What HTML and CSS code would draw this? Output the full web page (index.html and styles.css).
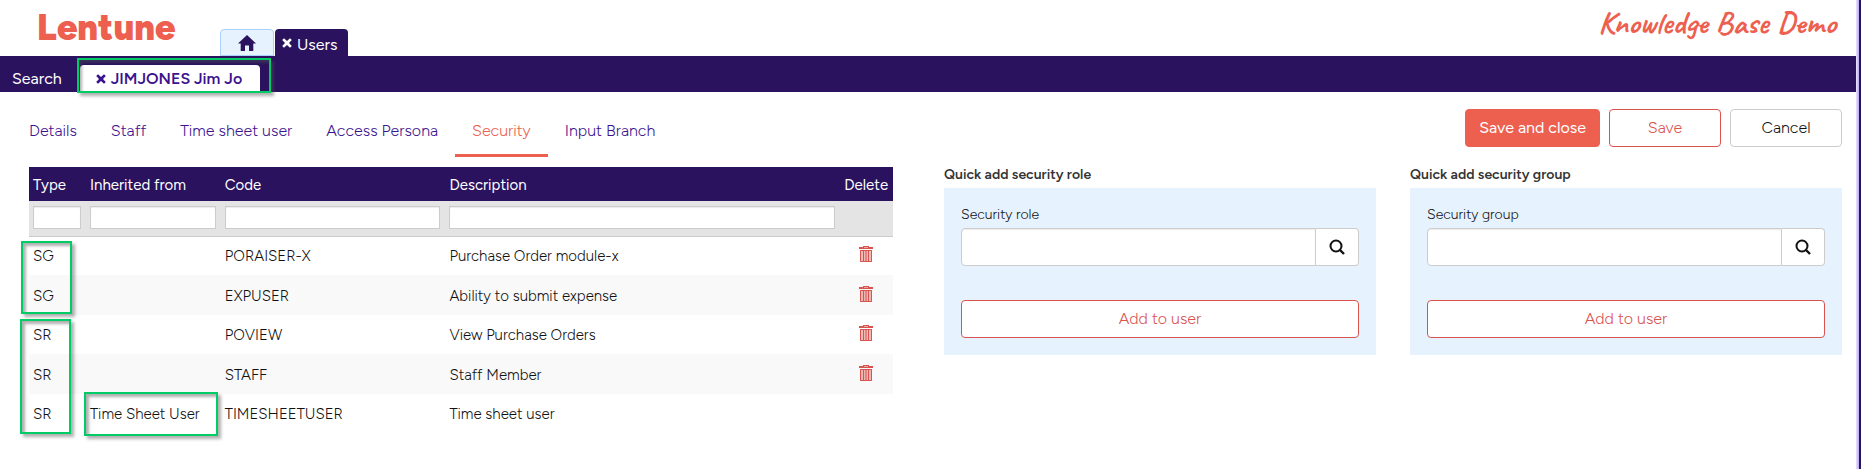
FILE: index.html
```html
<!DOCTYPE html>
<html lang="en">
<head>
<meta charset="utf-8">
<title>Lentune - Users</title>
<link rel="stylesheet" href="styles.css">
</head>
<body>
<svg width="0" height="0" class="defs" aria-hidden="true">
  <symbol id="cross" viewBox="0 0 10 10"><path d="M2 0.3 L5 3 L8 0.3 L9.8 2.1 L7 5 L9.8 7.9 L8 9.7 L5 7 L2 9.7 L0.2 7.9 L3 5 L0.2 2.1Z"/></symbol>
  <symbol id="trash" viewBox="0 0 14 16"><path d="M4 0h6v1H14v2H0V1h4zM5 1h4v.6h-4z" fill-rule="evenodd"/><path d="M1 4h12v12H1z" opacity=".4"/><path d="M1.500 4.500h11v11h-11zM4.500 5v10M7 5v10M9.500 5v10" fill="none" stroke="currentColor"/></symbol>
  <symbol id="search" viewBox="0 0 16 16"><circle cx="7" cy="7" r="5.500" fill="none" stroke="currentColor" stroke-width="2"/><path d="M10.500 10.500L15 15" stroke="currentColor" stroke-width="2.400"/></symbol>
</svg>
<div class="app">
  <header class="header">
    <a class="logo" href="#">Lentune</a>
    <nav class="main-tabs" aria-label="Modules">
      <a class="home-tab" href="#" aria-label="Home"><svg width="18" height="16" viewBox="0 0 18 16"><path d="M9 0L18 8.500H15.300V16H11V10.500H7V16H2.700V8.500H0Z"/></svg></a>
      <a class="users-tab" href="#"><svg class="cross" width="10" height="10"><use href="#cross"/></svg>Users</a>
    </nav>
    <div class="env-name">Knowledge Base Demo</div>
  </header>
  <nav class="subbar" aria-label="Open records">
    <a class="search-link" href="#">Search</a>
    <div class="record-wrap">
      <a class="record-tab" href="#"><svg class="cross" width="10" height="10"><use href="#cross"/></svg>JIMJONES Jim Jo</a>
      <span class="mark mark-record"></span>
    </div>
  </nav>
  <main class="content">
    <div class="toolbar">
      <nav class="tabs" aria-label="User sections">
        <a href="#">Details</a>
        <a href="#">Staff</a>
        <a href="#">Time sheet user</a>
        <a href="#">Access Persona</a>
        <a href="#" class="current">Security</a>
        <a href="#">Input Branch</a>
      </nav>
      <div class="actions">
        <button class="btn btn-primary" type="button">Save and close</button>
        <button class="btn btn-outline" type="button">Save</button>
        <button class="btn" type="button">Cancel</button>
      </div>
    </div>
    <div class="panels">
      <div class="table-wrap">
        <table class="roles">
          <colgroup><col class="c-type"><col class="c-from"><col class="c-code"><col class="c-desc"><col class="c-del"></colgroup>
          <thead>
            <tr><th>Type</th><th>Inherited from</th><th>Code</th><th>Description</th><th>Delete</th></tr>
            <tr class="filters">
              <td><input type="text" aria-label="Filter type"></td>
              <td><input type="text" aria-label="Filter inherited from"></td>
              <td><input type="text" aria-label="Filter code"></td>
              <td><input type="text" aria-label="Filter description"></td>
              <td></td>
            </tr>
          </thead>
          <tbody>
            <tr><td>SG</td><td></td><td>PORAISER-X</td><td>Purchase Order module-x</td><td class="del"><button type="button" aria-label="Delete"><svg width="14" height="16"><use href="#trash"/></svg></button></td></tr>
            <tr><td>SG</td><td></td><td>EXPUSER</td><td>Ability to submit expense</td><td class="del"><button type="button" aria-label="Delete"><svg width="14" height="16"><use href="#trash"/></svg></button></td></tr>
            <tr><td>SR</td><td></td><td>POVIEW</td><td>View Purchase Orders</td><td class="del"><button type="button" aria-label="Delete"><svg width="14" height="16"><use href="#trash"/></svg></button></td></tr>
            <tr><td>SR</td><td></td><td>STAFF</td><td>Staff Member</td><td class="del"><button type="button" aria-label="Delete"><svg width="14" height="16"><use href="#trash"/></svg></button></td></tr>
            <tr><td>SR</td><td>Time Sheet User</td><td>TIMESHEETUSER</td><td>Time sheet user</td><td></td></tr>
          </tbody>
        </table>
        <span class="mark mark-groups"></span>
        <span class="mark mark-roles"></span>
        <span class="mark mark-from"></span>
      </div>
      <div class="quick">
        <section>
          <h2>Quick add security role</h2>
          <div class="card">
            <label for="role">Security role</label>
            <div class="lookup"><input id="role" type="text"><button type="button" aria-label="Find role"><svg width="16" height="16"><use href="#search"/></svg></button></div>
            <button class="btn btn-outline" type="button">Add to user</button>
          </div>
        </section>
        <section>
          <h2>Quick add security group</h2>
          <div class="card">
            <label for="group">Security group</label>
            <div class="lookup"><input id="group" type="text"><button type="button" aria-label="Find group"><svg width="16" height="16"><use href="#search"/></svg></button></div>
            <button class="btn btn-outline" type="button">Add to user</button>
          </div>
        </section>
      </div>
    </div>
  </main>
</div>
<div class="edge"></div>
</body>
</html>
```

FILE: styles.css
```css
* { box-sizing: border-box; }
body {
  margin: 0;
  min-height: 100vh;
  display: flex;
  background: #fff;
  color: #111;
  font: 300 15px/20px Figtree, Lato, sans-serif;
}
a { text-decoration: none; color: inherit; }
button, input { font: inherit; color: inherit; }
svg { display: block; fill: currentColor; }
.defs { position: absolute; }
.app { flex: 1; min-width: 0; }
.edge {
  width: 5px;
  background: linear-gradient(to right, #e9e4ff, #b9aaf5 3px, #2a125f 3px);
}

.header { display: flex; height: 56px; padding: 0 20px 0 37px; }
.logo {
  width: 183px;
  color: #ed604f;
  font-size: 36px;
  font-weight: 900;
  line-height: 56px;
}
.main-tabs { display: flex; align-items: flex-end; gap: 1px; font-size: 16px; font-weight: 400; }
.home-tab, .users-tab {
  display: flex;
  align-items: center;
  height: 27px;
  border-radius: 4px 4px 0 0;
}
.home-tab {
  width: 54px;
  justify-content: center;
  background: #e7f2ff;
  border: 1px solid #a9d1fb;
  color: #2a125f;
}
.users-tab {
  gap: 5px;
  padding: 4px 11px 0 7px;
  background: #2a125f;
  color: #fff;
}
.users-tab .cross { margin-bottom: 3px; }
.env-name {
  margin-left: auto;
  color: #ed604f;
  font: bold 32px/46px Caveat, Lato, cursive;
}

.subbar {
  display: flex;
  align-items: flex-end;
  gap: 18px;
  height: 36px;
  padding-left: 12px;
  background: #2a125f;
  color: #fff;
  font-size: 16px;
  font-weight: 400;
}
.search-link { line-height: 27px; }
.record-wrap { position: relative; }
.record-tab {
  display: flex;
  align-items: center;
  gap: 5px;
  height: 27px;
  padding: 0 18px 0 16px;
  border-radius: 4px 4px 0 0;
  background: #fff;
  color: #3b128f;
  font-weight: 600;
}

.mark {
  position: absolute;
  border: 2px solid #00cc66;
  box-shadow: 3px 3px 3px rgba(80, 80, 80, .45), inset 3px 3px 3px rgba(80, 80, 80, .45);
  pointer-events: none;
}
.mark-record { left: -3px; right: -11px; top: -7px; bottom: -1px; }
.mark-groups { left: -8px; top: 74px; width: 51px; height: 73px; }
.mark-roles { left: -9px; top: 152px; width: 51px; height: 115px; }
.mark-from { left: 55px; top: 225px; width: 134px; height: 44px; }

.content { padding: 17px 14px 24px 29px; }
.toolbar { display: flex; justify-content: space-between; height: 48px; }
.tabs { display: flex; margin-left: -17px; font-size: 16px; color: #3b128f; }
.tabs a { padding: 12px 17px 0; border-bottom: 3px solid transparent; }
.tabs .current { color: #ed604f; border-color: #ed604f; }
.actions { display: flex; gap: 9px; }
.btn {
  min-width: 112px;
  height: 38px;
  padding: 0 13px;
  border: 1px solid #ccc;
  border-radius: 4px;
  background: #fff;
  font-size: 16px;
}
.btn-outline { border-color: #d9534f; color: #d9534f; }
.btn-primary { background: #ed604f; border-color: #ed604f; color: #fff; font-weight: 400; }

.panels { display: flex; gap: 51px; padding-top: 10px; }
.table-wrap { position: relative; flex: 864 1 0; }
.quick { flex: 898 1 0; display: flex; gap: 34px; }
.quick section { flex: 1; }

.roles { width: 100%; table-layout: fixed; border-collapse: collapse; }
.c-type { width: 6.6%; }
.c-from { width: 15.6%; }
.c-code { width: 26%; }
.c-desc { width: 45.7%; }
.roles th, .roles td { height: 39px; padding: 1px 5px 0 4px; text-align: left; white-space: nowrap; }
.roles tbody tr:nth-child(even) td { height: 40px; }
.roles th { height: 34px; background: #2a125f; color: #fff; font-weight: 400; }
.roles .filters td { height: 35px; padding-bottom: 2px; background: #e4e4e4; border-bottom: 1px solid #ccc; }
.filters input {
  display: block;
  width: 100%;
  height: 23px;
  border: 1px solid #ccc;
  box-shadow: inset 0 1px 1px rgba(0, 0, 0, .08);
}
.roles tbody tr:nth-child(even) { background: #f9f9f9; }
.del button { display: block; margin: 0 auto; padding: 0 0 4px; border: 0; background: none; color: #d9534f; }

.quick h2 { margin: 0; height: 21px; font-size: 14px; line-height: 16px; font-weight: 600; color: #333; }
.card { display: flex; flex-direction: column; padding: 17px; background: #e7f2ff; }
.card label { height: 23px; font-size: 14px; }
.lookup { display: flex; height: 38px; margin-bottom: 34px; }
.lookup input {
  flex: 1;
  min-width: 0;
  border: 1px solid #ccc;
  border-radius: 4px 0 0 4px;
  box-shadow: inset 0 1px 1px rgba(0, 0, 0, .08);
}
.lookup button {
  display: grid;
  place-items: center;
  width: 43px;
  border: 1px solid #ccc;
  border-left: 0;
  border-radius: 0 4px 4px 0;
  background: #fff;
}
```
